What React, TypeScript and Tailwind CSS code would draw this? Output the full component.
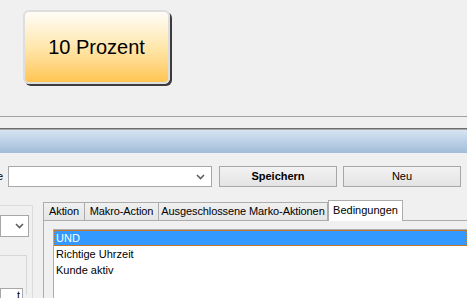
import React from 'react';

const Chevron = () => (
  <svg width="9" height="6" viewBox="0 0 9 6" className="shrink-0">
    <path d="M1 1 L4.5 4.5 L8 1" stroke="#606060" strokeWidth="1.6" fill="none" />
  </svg>
);

const TABS = [
  { label: 'Aktion', w: 'w-[42px]' },
  { label: 'Makro-Action', w: 'w-[75px]' },
  { label: 'Ausgeschlossene Marko-Aktionen', w: 'w-[170px]' },
];

const ITEMS = ['UND', 'Richtige Uhrzeit', 'Kunde aktiv'];

export default function App() {
  return (
    <div
      className="w-[467px] h-[298px] overflow-hidden bg-[#f0f0f0] text-[11px] text-black"
      style={{ fontFamily: '"Liberation Sans", Arial, sans-serif' }}
    >
      {/* top area with big button */}
      <div className="h-[116px] pt-[10px] pl-[23px]">
        <div className="w-[147px] h-[74px] rounded-[6px] border-2 border-[#dedede] shadow-[2px_2px_0_#3c3c3c] bg-linear-to-b from-[#fffdf8] via-[#ffe7ac] to-[#ffc54f] flex items-center justify-center">
          <span className="text-[20px] leading-none">10 Prozent</span>
        </div>
      </div>
      <div className="h-px bg-[#a0a0a0]" />
      <div className="h-[11px]" />
      <div className="h-px bg-[#6e6e6e]" />
      <div className="h-px bg-[#a8a8a8]" />
      <div className="h-[23px] bg-linear-to-b from-[#d6e4f3] to-[#a2bcd8]" />

      {/* toolbar row */}
      <div className="mt-[13px] flex items-center h-[21px]">
        <span className="-ml-[3px] w-[11px]">e</span>
        <div className="w-[204px] h-[21px] bg-white border border-[#a7a7a7] flex items-center justify-end pr-[6px]">
          <Chevron />
        </div>
        <button className="ml-[7px] w-[118px] h-[21px] border border-[#a7a7a7] bg-linear-to-b from-[#f2f2f2] to-[#e4e4e4] font-bold">
          Speichern
        </button>
        <button className="ml-[6px] w-[118px] h-[21px] border border-[#a7a7a7] bg-linear-to-b from-[#f2f2f2] to-[#e4e4e4]">
          Neu
        </button>
      </div>

      {/* content */}
      <div className="mt-[13px] flex">
        {/* left panel */}
        <div className="w-[33px] mt-[5px] border-r border-t border-[#dcdcdc] h-[120px] flex flex-col">
          <div className="mt-[9px] w-[29px] h-[22px] bg-white border border-[#a7a7a7] flex items-center justify-end pr-[4px]">
            <Chevron />
          </div>
          <div className="mt-[18px] w-[27px] h-[40px] border-t border-r border-[#d8d8d8]" />
          <div className="-mt-[7px] w-[23px] h-[20px] bg-white border border-[#a7a7a7] text-right pr-[2px] leading-[12px]">
            t
          </div>
        </div>

        {/* tab control */}
        <div className="ml-[10px] flex-1 flex flex-col">
          <div className="flex items-end h-[20px]">
            {TABS.map((t) => (
              <div
                key={t.label}
                className={`${t.w} h-[18px] -mr-px border border-b-0 border-[#acacac] bg-linear-to-b from-[#f0f0f0] to-[#e5e5e5] flex items-center justify-center leading-none whitespace-nowrap tracking-[-0.1px]`}
              >
                {t.label}
              </div>
            ))}
            <div className="relative z-10 w-[75px] h-[21px] -mb-px ml-px border border-b-0 border-[#acacac] bg-white flex items-start justify-center pt-[4px] leading-none">
              Bedingungen
            </div>
          </div>
          <div className="border-t border-l border-[#acacac] pt-[8px] pl-[9px] h-[90px]">
            <div className="bg-white border-l border-t border-[#acacac] h-full">
              {ITEMS.map((it, i) => (
                <div
                  key={it}
                  className={
                    i === 0
                      ? 'h-[16px] bg-[#3399ff] text-white border border-dotted border-[#c2782e] pl-[1px] leading-[14px]'
                      : 'h-[16px] pl-[2px] leading-[16px]'
                  }
                >
                  {it}
                </div>
              ))}
            </div>
          </div>
        </div>
      </div>
    </div>
  );
}
